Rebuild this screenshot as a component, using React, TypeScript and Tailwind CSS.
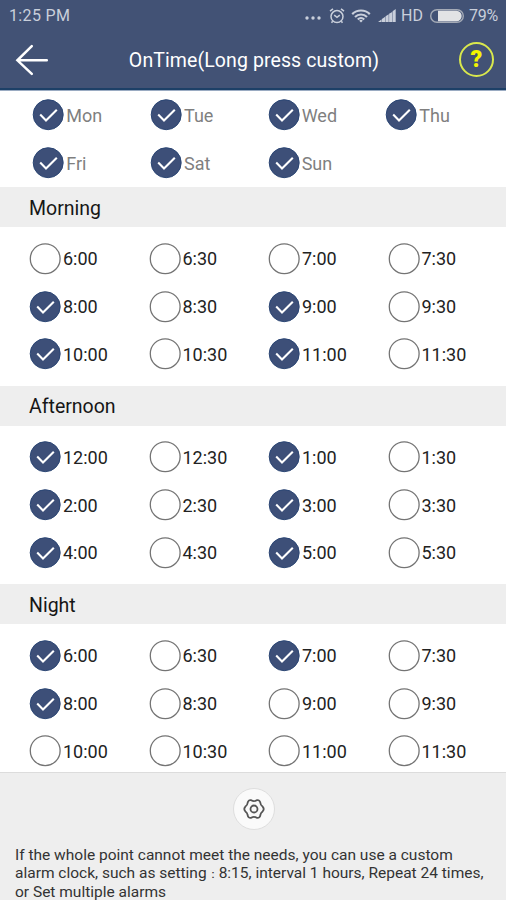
import clsx from "clsx";

type Slot = { label: string; on?: boolean };

const days = ["Mon", "Tue", "Wed", "Thu", "Fri", "Sat", "Sun"];

const morning: Slot[] = [
  { label: "6:00" },
  { label: "6:30" },
  { label: "7:00" },
  { label: "7:30" },
  { label: "8:00", on: true },
  { label: "8:30" },
  { label: "9:00", on: true },
  { label: "9:30" },
  { label: "10:00", on: true },
  { label: "10:30" },
  { label: "11:00", on: true },
  { label: "11:30" },
];

const afternoon: Slot[] = [
  { label: "12:00", on: true },
  { label: "12:30" },
  { label: "1:00", on: true },
  { label: "1:30" },
  { label: "2:00", on: true },
  { label: "2:30" },
  { label: "3:00", on: true },
  { label: "3:30" },
  { label: "4:00", on: true },
  { label: "4:30" },
  { label: "5:00", on: true },
  { label: "5:30" },
];

const night: Slot[] = [
  { label: "6:00", on: true },
  { label: "6:30" },
  { label: "7:00", on: true },
  { label: "7:30" },
  { label: "8:00", on: true },
  { label: "8:30" },
  { label: "9:00" },
  { label: "9:30" },
  { label: "10:00" },
  { label: "10:30" },
  { label: "11:00" },
  { label: "11:30" },
];

function Check({ on }: { on?: boolean }) {
  return (
    <svg viewBox="0 0 32 32" className="size-8 shrink-0" fill="none">
      {on ? (
        <>
          <circle cx="16.2" cy="15.7" r="15" fill="#3d4f78" stroke="#2b4674" />
          <path d="M8.2 15.6l5.8 5.8L24.8 10.8" stroke="#fff" strokeWidth="2.1" />
        </>
      ) : (
        <circle cx="16.2" cy="15.7" r="14.9" fill="#fff" stroke="#747474" strokeWidth="1.3" />
      )}
    </svg>
  );
}

function StatusBar() {
  return (
    <div className="flex h-[31px] items-center justify-between pl-[9px] pr-2 text-[#c9cfdb]">
      <span className="text-[16px] tracking-[0.35px]">1:25 PM</span>
      <div className="flex items-center">
        <svg viewBox="0 0 16 4" className="mt-[5px] h-1 w-4" fill="currentColor">
          <circle cx="2" cy="2" r="1.7" />
          <circle cx="8" cy="2" r="1.7" />
          <circle cx="14" cy="2" r="1.7" />
        </svg>
        <svg viewBox="0 0 16 16" className="ml-2 size-4" fill="none" stroke="currentColor" strokeWidth="1.5">
          <circle cx="8" cy="8.6" r="6" />
          <path d="M1 3.2L4 .9M15 3.2L12 .9M5.2 7.2L8 9.4l2.8-2.2M3.7 13.2l-1.2 1.6M12.3 13.2l1.2 1.6" />
        </svg>
        <svg viewBox="0 0 20 14" className="ml-1.5 h-3.5 w-5" fill="none" stroke="currentColor" strokeWidth="2.2">
          <path d="M1.2 5.1a12.5 12.5 0 0 1 17.6 0M4 8a8.5 8.5 0 0 1 12 0M6.8 10.5a4.6 4.6 0 0 1 6.4 0" />
          <path d="M8.2 11.7L10 13.6l1.8-1.9a2.6 2.6 0 0 0-3.6 0z" fill="currentColor" stroke="none" />
        </svg>
        <svg viewBox="0 0 18 13" className="ml-[7px] h-[13px] w-[18px]" fill="currentColor">
          <path d="M0 13L3.5 10.5V13zM3.9 10L7.2 7.8V13H3.9zM7.6 7.3l3.1-2V13H7.6zM11.1 4.8L14.2 2.9V13h-3.1zM14.6 2.2L17.7 0v13h-3.1z" />
        </svg>
        <span className="ml-[5px] text-[16px]">HD</span>
        <svg viewBox="0 0 34 14" className="ml-[7px] h-3.5 w-[34px]" fill="none">
          <rect x=".7" y=".7" width="32.6" height="12.6" rx="6.3" stroke="#a4aab6" strokeWidth="1.4" />
          <path d="M8 1.8h18.5a5.2 5.2 0 0 1 0 10.4H8z" fill="#e2e3e5" />
        </svg>
        <span className="ml-[5px] text-[16px] tracking-[-0.2px]">79%</span>
      </div>
    </div>
  );
}

function Header() {
  return (
    <header className="h-[91px] border-b border-[#9aabc2] bg-[#425275]">
      <div className="flex h-[90px] flex-col border-b-2 border-[#1d4067]">
        <StatusBar />
        <div className="flex h-[57px] items-center justify-between pl-[15px] pr-3">
          <svg
            viewBox="0 0 34 32"
            className="h-8 w-[34px]"
            fill="none"
            stroke="#fff"
            strokeWidth="2.5"
            strokeLinecap="round"
          >
            <path d="M16.8 2.2L2.4 16.3l14.4 13.5M2.4 16.3h29.4" />
          </svg>
          <h1 className="pt-0.5 text-[19.5px] tracking-[0.1px] text-white">OnTime(Long press custom)</h1>
          <span className="flex size-[35px] items-center justify-center rounded-full border-2 border-[#d9e84d] pt-0.5 text-[23px] font-black text-[#f2f500]">
            ?
          </span>
        </div>
      </div>
    </header>
  );
}

function Section({ title, slots, last }: { title: string; slots: Slot[]; last?: boolean }) {
  return (
    <section>
      <h2 className="flex h-10 items-center bg-[#eee] pl-[29px] pt-[3px] text-[19.5px] text-[#161616]">{title}</h2>
      <div
        className={clsx(
          "grid grid-cols-[repeat(4,119.5px)] grid-rows-[repeat(3,47.7px)] pl-[29px] pt-2",
          last ? "h-[148px]" : "h-[158.5px]"
        )}
      >
        {slots.map((slot) => (
          <div key={slot.label} className="flex items-center gap-0.5 text-[18px] text-[#222]">
            <Check on={slot.on} />
            <span>{slot.label}</span>
          </div>
        ))}
      </div>
    </section>
  );
}

export default function App() {
  return (
    <main className="flex h-[900px] w-[506px] flex-col overflow-hidden bg-white font-['Roboto',sans-serif]">
      <Header />
      <div className="grid h-24 grid-cols-[repeat(4,117.7px)] grid-rows-[repeat(2,48px)] pl-[32.3px]">
        {days.map((day) => (
          <div key={day} className="flex items-center gap-0.5 text-[18px] text-[#7f7f7f]">
            <Check on />
            <span className="pt-px">{day}</span>
          </div>
        ))}
      </div>
      <Section title="Morning" slots={morning} />
      <Section title="Afternoon" slots={afternoon} />
      <Section title="Night" slots={night} last />
      <footer className="flex-1 border-t border-[#dcdcdc] bg-[#eee]">
        <div className="flex justify-center pl-px pt-[15px]">
          <button className="flex size-[42px] items-center justify-center rounded-full border border-[#dedede] bg-[#fafafa]">
            <svg
              viewBox="0 0 24 24"
              className="size-6"
              fill="none"
              stroke="#555"
              strokeWidth="1.8"
              strokeLinejoin="round"
            >
              <path d="M9.2 3.2Q12 5 14.8 3.2Q17.8 2.6 18.4 6Q18.6 8.2 20.6 9.6Q22.8 12 20.6 14.4Q18.6 15.8 18.4 18Q17.8 21.4 14.8 20.8Q12 19 9.2 20.8Q6.2 21.4 5.6 18Q5.4 15.8 3.4 14.4Q1.2 12 3.4 9.6Q5.4 8.2 5.6 6Q6.2 2.6 9.2 3.2Z" />
              <circle cx="12" cy="12" r="3.5" />
            </svg>
          </button>
        </div>
        <p className="whitespace-nowrap pl-[15px] pt-4 text-[15.5px] leading-[18.3px] text-[#333]">
          If the whole point cannot meet the needs, you can use a custom
          <br />
          alarm clock, such as setting<span className="text-[12px] leading-none">：</span>8:15, interval 1 hours,
          Repeat 24 times,
          <br />
          or Set multiple alarms
        </p>
      </footer>
    </main>
  );
}
